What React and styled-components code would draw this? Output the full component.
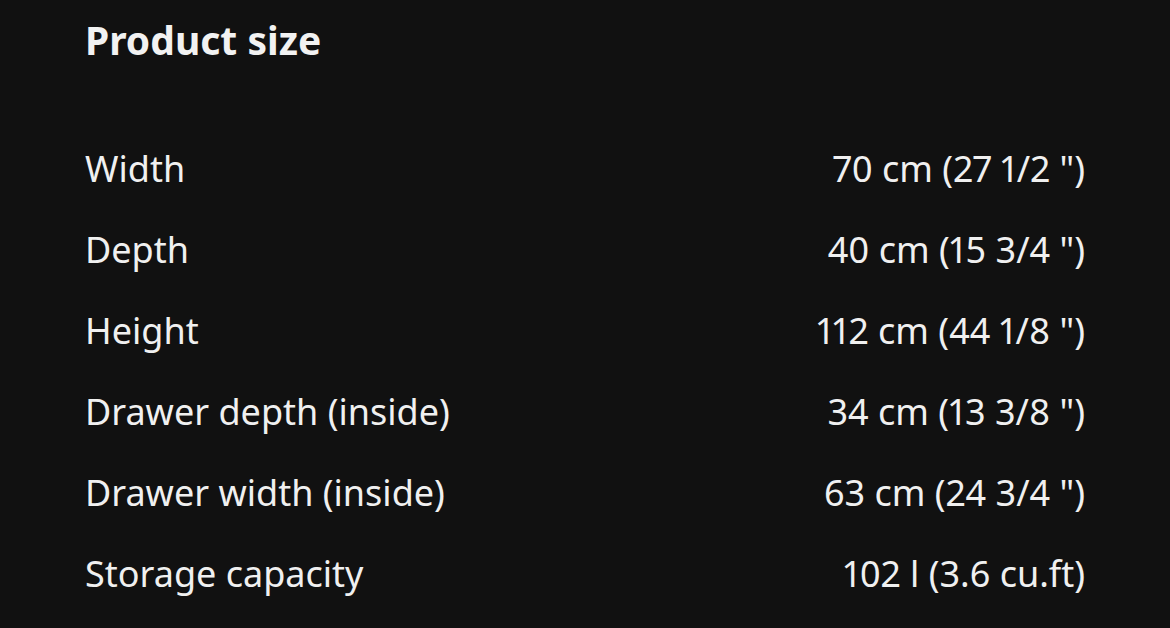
import React from 'react';
import styled, { createGlobalStyle } from 'styled-components';

const GlobalStyle = createGlobalStyle`
  html, body {
    margin: 0;
    padding: 0;
    background: #111111;
  }
  body {
    font-family: "Noto Sans", "Open Sans", sans-serif;
    color: #f0f0f0;
  }
`;

const Section = styled.section`
  width: 1170px;
  height: 628px;
  box-sizing: border-box;
  padding: 16px 85px 0 85px;
  background: #111111;
  overflow: hidden;
`;

const Title = styled.h2`
  margin: 0;
  font-size: 39px;
  font-weight: 700;
  line-height: 48px;
  color: #f2f2f2;
`;

const List = styled.dl`
  margin: 64px 0 0 0;
  display: flex;
  flex-direction: column;
`;

const Row = styled.div`
  display: flex;
  justify-content: space-between;
  align-items: center;
  height: 81px;
  font-size: 36px;
  line-height: 48px;
  font-variant-numeric: proportional-nums;
`;

const Label = styled.dt`
  margin: 0;
  color: #f0f0f0;
`;

const Value = styled.dd`
  margin: 0;
  color: #f0f0f0;
`;

const sizes = [
  ['Width', '70 cm (27 1/2 ")'],
  ['Depth', '40 cm (15 3/4 ")'],
  ['Height', '112 cm (44 1/8 ")'],
  ['Drawer depth (inside)', '34 cm (13 3/8 ")'],
  ['Drawer width (inside)', '63 cm (24 3/4 ")'],
  ['Storage capacity', '102 l (3.6 cu.ft)'],
];

export default function App() {
  return (
    <>
      <GlobalStyle />
      <Section>
        <Title>Product size</Title>
        <List>
          {sizes.map(([label, value]) => (
            <Row key={label}>
              <Label>{label}</Label>
              <Value>{value}</Value>
            </Row>
          ))}
        </List>
      </Section>
    </>
  );
}
